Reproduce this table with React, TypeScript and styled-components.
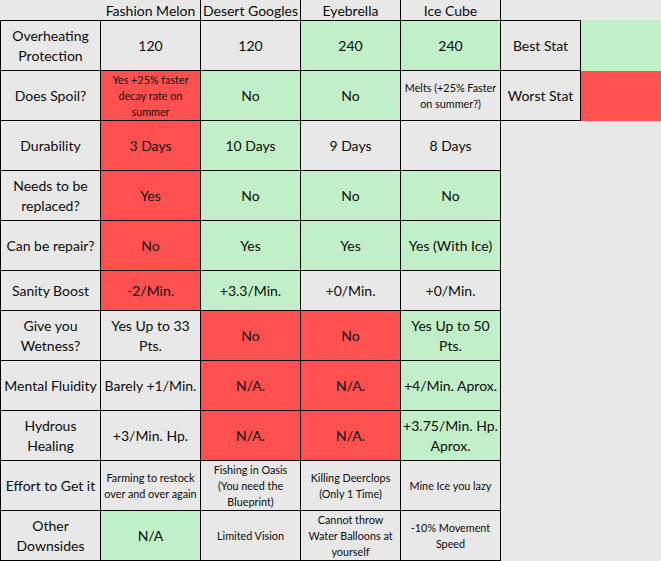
import styled, { createGlobalStyle } from "styled-components";

type Tone = "grey" | "green" | "red";
type Cell = { text: string; tone?: Tone; small?: boolean };
type Row = { label: string; height?: number; cells: Cell[] };

const toneColor = (tone?: Tone) => {
  if (tone === "green") return "#c1f0c8";
  if (tone === "red") return "#ff5050";
  return "#e8e8e8";
};

const GlobalStyle = createGlobalStyle`
  body {
    margin: 0;
    background: #e8e8e8;
    font-family: Lato, "Liberation Sans", sans-serif;
    color: #0c0c0c;
  }
`;

const Page = styled.div`
  display: flex;
  flex-direction: row;
  align-items: flex-start;
  width: 661px;
  height: 561px;
  overflow: hidden;
`;

const Sheet = styled.div`
  display: grid;
  grid-template-columns: 101px repeat(4, 100px);
`;

const HeadCell = styled.div<{ first?: boolean }>`
  height: 21px;
  box-sizing: border-box;
  border-bottom: 1px solid #000;
  border-right: ${(p) => (p.first ? "none" : "1px solid #000")};
  display: flex;
  align-items: center;
  justify-content: center;
  font-size: 14px;
  white-space: nowrap;
`;

const DataCell = styled.div<{ tone?: Tone; small?: boolean; h: number; first?: boolean }>`
  height: ${(p) => p.h}px;
  box-sizing: border-box;
  border-right: 1px solid #000;
  border-bottom: 1px solid #000;
  border-left: ${(p) => (p.first ? "1px solid #000" : "none")};
  background: ${(p) => toneColor(p.tone)};
  display: flex;
  align-items: center;
  justify-content: center;
  text-align: center;
  white-space: pre-line;
  padding: 0 1px;
  font-size: ${(p) => (p.small ? "10.8px" : "14px")};
  line-height: ${(p) => (p.small ? "16px" : "20px")};
`;

const Legend = styled.div`
  margin-top: 20px;
  display: grid;
  grid-template-columns: 80px 81px;
`;

const LegendLabel = styled.div<{ top?: boolean }>`
  height: ${(p) => (p.top ? 51 : 50)}px;
  box-sizing: border-box;
  border-top: ${(p) => (p.top ? "1px solid #000" : "none")};
  border-right: 1px solid #000;
  border-bottom: 1px solid #000;
  display: flex;
  align-items: center;
  justify-content: center;
  font-size: 14px;
`;

const Swatch = styled.div<{ tone: Tone }>`
  background: ${(p) => toneColor(p.tone)};
`;

const items = ["Fashion Melon", "Desert Googles", "Eyebrella", "Ice Cube"];

const rows: Row[] = [
  {
    label: "Overheating Protection",
    cells: [{ text: "120" }, { text: "120" }, { text: "240", tone: "green" }, { text: "240", tone: "green" }],
  },
  {
    label: "Does Spoil?",
    cells: [
      { text: "Yes +25% faster decay rate on summer", tone: "red", small: true },
      { text: "No", tone: "green" },
      { text: "No", tone: "green" },
      { text: "Melts (+25% Faster on summer?)", small: true },
    ],
  },
  {
    label: "Durability",
    cells: [{ text: "3 Days", tone: "red" }, { text: "10 Days", tone: "green" }, { text: "9 Days" }, { text: "8 Days" }],
  },
  {
    label: "Needs to be replaced?",
    cells: [
      { text: "Yes", tone: "red" },
      { text: "No", tone: "green" },
      { text: "No", tone: "green" },
      { text: "No", tone: "green" },
    ],
  },
  {
    label: "Can be repair?",
    cells: [
      { text: "No", tone: "red" },
      { text: "Yes", tone: "green" },
      { text: "Yes", tone: "green" },
      { text: "Yes (With Ice)", tone: "green" },
    ],
  },
  {
    label: "Sanity Boost",
    height: 40,
    cells: [{ text: "-2/Min.", tone: "red" }, { text: "+3.3/Min.", tone: "green" }, { text: "+0/Min." }, { text: "+0/Min." }],
  },
  {
    label: "Give you Wetness?",
    cells: [
      { text: "Yes Up to 33 Pts." },
      { text: "No", tone: "red" },
      { text: "No", tone: "red" },
      { text: "Yes Up to 50 Pts.", tone: "green" },
    ],
  },
  {
    label: "Mental Fluidity",
    cells: [
      { text: "Barely +1/Min." },
      { text: "N/A.", tone: "red" },
      { text: "N/A.", tone: "red" },
      { text: "+4/Min. Aprox.", tone: "green" },
    ],
  },
  {
    label: "Hydrous Healing",
    cells: [
      { text: "+3/Min. Hp." },
      { text: "N/A.", tone: "red" },
      { text: "N/A.", tone: "red" },
      { text: "+3.75/Min. Hp. Aprox.", tone: "green" },
    ],
  },
  {
    label: "Effort to Get it",
    cells: [
      { text: "Farming to restock over and over again", small: true },
      { text: "Fishing in Oasis\n(You need the\nBlueprint)", small: true },
      { text: "Killing Deerclops (Only 1 Time)", small: true },
      { text: "Mine Ice you lazy", small: true },
    ],
  },
  {
    label: "Other Downsides",
    cells: [
      { text: "N/A", tone: "green" },
      { text: "Limited Vision", small: true },
      { text: "Cannot throw Water Balloons at yourself", small: true },
      { text: "-10% Movement Speed", small: true },
    ],
  },
];

export default function App() {
  return (
    <>
      <GlobalStyle />
      <Page>
        <Sheet>
          <HeadCell first />
          {items.map((name) => (
            <HeadCell key={name}>{name}</HeadCell>
          ))}
          {rows.map((row) => {
            const h = row.height ?? 50;
            return [
              <DataCell key={row.label} h={h} first>
                {row.label}
              </DataCell>,
              ...row.cells.map((c, i) => (
                <DataCell key={row.label + i} h={h} tone={c.tone} small={c.small}>
                  {c.text}
                </DataCell>
              )),
            ];
          })}
        </Sheet>
        <Legend>
          <LegendLabel top>Best Stat</LegendLabel>
          <Swatch tone="green" />
          <LegendLabel>Worst Stat</LegendLabel>
          <Swatch tone="red" />
        </Legend>
      </Page>
    </>
  );
}
